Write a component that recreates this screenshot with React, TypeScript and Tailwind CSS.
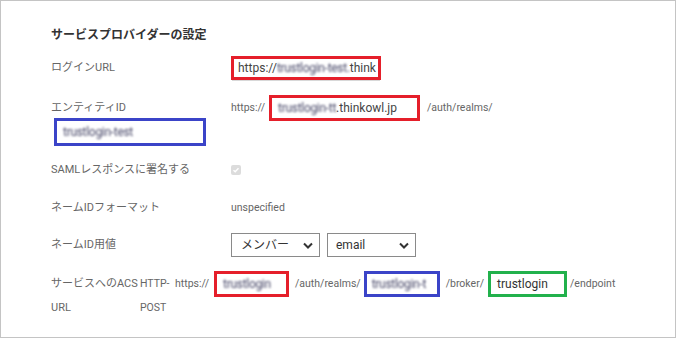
import React from "react";

const Chevron = () => (
  <svg width="10" height="7" viewBox="0 0 10 7" className="shrink-0">
    <polyline points="1,1.5 5,5.5 9,1.5" fill="none" stroke="#333" strokeWidth="2" />
  </svg>
);

const Blur = ({ children }: { children: React.ReactNode }) => (
  <span className="inline-block blur-[0.8px] text-[#4a4a6a] tracking-[-0.3px]">{children}</span>
);

export default function App() {
  return (
    <div className="w-[676px] h-[338px] bg-white border border-[#c4c4c4] font-['Roboto','Noto_Sans_CJK_JP',sans-serif] text-[11px] text-[#666] pl-[50px] pt-[24px] overflow-hidden">
      <div className="h-[20px] flex items-center text-[12px] font-bold text-[#333]">サービスプロバイダーの設定</div>

      {/* Login URL */}
      <div className="mt-[10px] h-[26px] flex items-center">
        <div className="w-[180px]">ログインURL</div>
        <div className="flex flex-col">
          <div className="w-[150px] h-[24px] border-[3px] border-[#e51f2a] bg-white flex items-center px-[4px] text-[12px] text-[#444] whitespace-nowrap overflow-hidden">
            https://<Blur>trustlogin-test.</Blur>think
          </div>
          <div className="ml-[1px] w-[148px] h-[1px] bg-[#d8d8d8]"></div>
        </div>
      </div>

      {/* Entity ID */}
      <div className="mt-[14px] h-[26px] flex items-center text-[10.5px]">
        <div className="w-[180px] text-[11px]">エンティティID</div>
        <div>https://</div>
        <div className="ml-[4px] w-[151px] h-[26px] border-[3px] border-[#e51f2a] bg-white flex items-center px-[6px] text-[12px] text-[#444] whitespace-nowrap overflow-hidden">
          <Blur>trustlogin-tt</Blur>.thinkowl.jp
        </div>
        <div className="ml-[7px]">/auth/realms/</div>
      </div>
      <div className="-mt-[3px] h-[28px] flex items-center">
        <div className="ml-[3px] w-[152px] h-[28px] border-[3px] border-[#3b44c8] bg-white flex items-center px-[6px] text-[12px] whitespace-nowrap overflow-hidden">
          <Blur>trustlogin-test</Blur>
        </div>
      </div>

      {/* SAML */}
      <div className="mt-[14px] h-[20px] flex items-center">
        <div className="w-[180px]">SAMLレスポンスに署名する</div>
        <div className="w-[10px] h-[10px] rounded-[2px] bg-[#dcdcdc] flex items-center justify-center">
          <svg width="8" height="8" viewBox="0 0 8 8">
            <polyline points="1.5,4.2 3.2,5.8 6.5,2.2" fill="none" stroke="#fff" strokeWidth="1.4" />
          </svg>
        </div>
      </div>

      {/* Name ID format */}
      <div className="mt-[18px] h-[20px] flex items-center">
        <div className="w-[180px]">ネームIDフォーマット</div>
        <div className="text-[10.5px]">unspecified</div>
      </div>

      {/* Name ID value */}
      <div className="mt-[15px] h-[24px] flex items-center">
        <div className="w-[180px]">ネームID用値</div>
        <div className="w-[89px] h-[24px] border border-[#8a8a8a] flex items-center justify-between pl-[9px] pr-[6px] text-[12px] text-[#333]">
          <span>メンバー</span>
          <Chevron />
        </div>
        <div className="ml-[7px] w-[89px] h-[24px] border border-[#8a8a8a] flex items-center justify-between pl-[8px] pr-[6px] text-[12px] text-[#333]">
          <span>email</span>
          <Chevron />
        </div>
      </div>

      {/* ACS URL */}
      <div className="mt-[14px] flex items-start">
        <div className="w-[89px] leading-[24px] pt-[1px]">
          <div>サービスへのACS</div>
          <div>URL</div>
        </div>
        <div className="w-[35px] leading-[24px] pt-[1px] text-[10.5px]">
          <div>HTTP-</div>
          <div>POST</div>
        </div>
        <div className="flex items-center h-[26px] text-[10.5px]">
          <div>https://</div>
          <div className="ml-[5px] w-[75px] h-[26px] border-[3px] border-[#e51f2a] bg-white flex items-center px-[6px] text-[12px] whitespace-nowrap overflow-hidden">
            <Blur>trustlogin</Blur>
          </div>
          <div className="ml-[6px]">/auth/realms/</div>
          <div className="ml-[3px] w-[76px] h-[26px] border-[3px] border-[#3b44c8] bg-white flex items-center px-[5px] text-[12px] whitespace-nowrap overflow-hidden">
            <Blur>trustlogin-t</Blur>
          </div>
          <div className="ml-[6px]">/broker/</div>
          <div className="ml-[4px] w-[79px] h-[26px] border-[3px] border-[#22b14c] bg-white flex items-center px-[6px] text-[12px] text-[#333] whitespace-nowrap overflow-hidden">
            trustlogin
          </div>
          <div className="ml-[3px]">/endpoint</div>
        </div>
      </div>
    </div>
  );
}
